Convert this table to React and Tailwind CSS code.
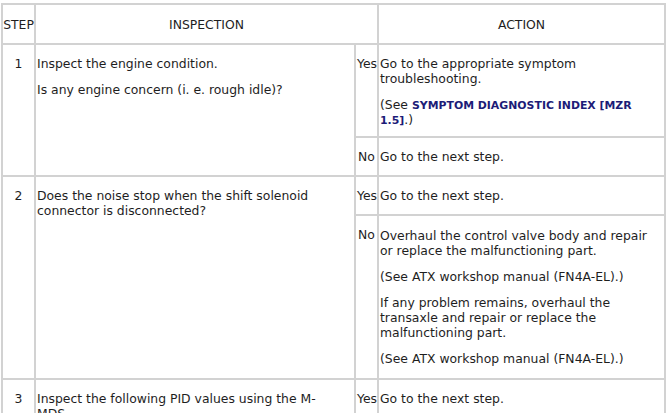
import React from 'react';

const cell = 'border-2 border-[#d2d2d2] align-top py-[11px] px-[1px]';

const Label = ({ children }) => (
  <td className={`${cell} text-center whitespace-nowrap`}>{children}</td>
);

const App = () => {
  return (
    <div className="min-h-screen bg-white text-[#1e1e1e] font-['DejaVu_Sans','Verdana',sans-serif] text-[12.4px] leading-[15px]">
      <table className="table-fixed border-collapse ml-[1px] mt-[3px] w-[665px]">
        <colgroup>
          <col className="w-[33px]" />
          <col className="w-[320px]" />
          <col className="w-[23px]" />
          <col className="w-[287px]" />
        </colgroup>
        <thead>
          <tr className="h-[40px]">
            <th className="border-2 border-[#d2d2d2] font-normal text-center align-middle px-0">STEP</th>
            <th colSpan={2} className="border-2 border-[#d2d2d2] font-normal text-center align-middle">INSPECTION</th>
            <th className="border-2 border-[#d2d2d2] font-normal text-center align-middle">ACTION</th>
          </tr>
        </thead>
        <tbody>
          {/* Step 1 */}
          <tr>
            <td rowSpan={2} className={`${cell} text-center`}>1</td>
            <td rowSpan={2} className={cell}>
              <p>Inspect the engine condition.</p>
              <p className="mt-[11px]">Is any engine concern (i. e. rough idle)?</p>
            </td>
            <Label>Yes</Label>
            <td className="border-2 border-[#d2d2d2] align-top pt-[11px] pb-[9px] px-[1px]">
              <p>Go to the appropriate symptom troubleshooting.</p>
              <p className="mt-[11px]">
                (See{' '}
                <span className="font-bold text-[10.9px] leading-[12px] text-[#1c1c78]">SYMPTOM DIAGNOSTIC INDEX [MZR 1.5]</span>
                .)
              </p>
            </td>
          </tr>
          <tr>
            <Label>No</Label>
            <td className={cell}>Go to the next step.</td>
          </tr>

          {/* Step 2 */}
          <tr>
            <td rowSpan={2} className={`${cell} text-center`}>2</td>
            <td rowSpan={2} className={cell}>
              <p>Does the noise stop when the shift solenoid connector is disconnected?</p>
            </td>
            <Label>Yes</Label>
            <td className={cell}>Go to the next step.</td>
          </tr>
          <tr>
            <Label>No</Label>
            <td className="border-2 border-[#d2d2d2] align-top pt-[12px] pb-[12px] px-[1px]">
              <p>Overhaul the control valve body and repair or replace the malfunctioning part.</p>
              <p className="mt-[11px]">(See ATX workshop manual (FN4A-EL).)</p>
              <p className="mt-[11px]">If any problem remains, overhaul the transaxle and repair or replace the malfunctioning part.</p>
              <p className="mt-[11px]">(See ATX workshop manual (FN4A-EL).)</p>
            </td>
          </tr>

          {/* Step 3 */}
          <tr>
            <td rowSpan={2} className={`${cell} text-center`}>3</td>
            <td rowSpan={2} className={cell}>
              <p>Inspect the following PID values using the M-<br />MDS.</p>
              <p className="mt-[11px]">Are the PID values normal?</p>
            </td>
            <Label>Yes</Label>
            <td className={cell}>Go to the next step.</td>
          </tr>
          <tr>
            <Label>No</Label>
            <td className={cell}>Repair or replace the malfunctioning part.</td>
          </tr>
        </tbody>
      </table>
    </div>
  );
};

export default App;
